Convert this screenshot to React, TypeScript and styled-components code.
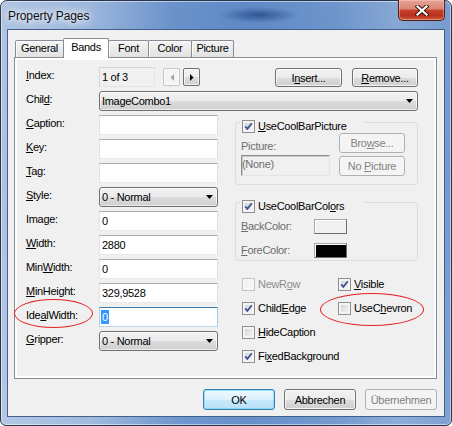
import React from "react";
import styled, { createGlobalStyle } from "styled-components";

const GlobalStyle = createGlobalStyle`
  html, body { margin: 0; padding: 0; background: #ffffff; }
  #root { width: 452px; height: 426px; }
  *, *::before, *::after { box-sizing: border-box; }
`;

const FONT = `"Liberation Sans", Arial, sans-serif`;

const Window = styled.div`
  width: 452px;
  height: 426px;
  border: 1px solid #28374d;
  border-radius: 7px 7px 6px 6px;
  padding: 0 6px 8px 6px;
  display: flex;
  flex-direction: column;
  font-family: ${FONT};
  font-size: 11px;
  letter-spacing: -0.3px;
  color: #000;
  background:
    radial-gradient(ellipse 40px 8px at 258px 14px, rgba(30, 62, 125, 0.7), rgba(30, 62, 125, 0) 100%),
    linear-gradient(90deg, rgba(255,255,255,0.5) 0%, rgba(255,255,255,0.38) 20%, rgba(255,255,255,0.08) 38%, rgba(255,255,255,0) 55%, rgba(255,255,255,0.1) 75%, rgba(255,255,255,0.26) 88%, rgba(255,255,255,0.16) 100%),
    linear-gradient(180deg, #5f8ac6 0%, #5885c4 40%, #6690ca 100%);
  box-shadow: inset 0 0 0 1px rgba(255,255,255,0.5);
`;

const TitleBar = styled.div`
  height: 28px;
  flex: none;
  display: flex;
  align-items: flex-start;
  justify-content: space-between;
`;

const Title = styled.div`
  padding: 7px 0 0 1px;
  font-size: 12px;
  line-height: 16px;
  letter-spacing: -0.1px;
  color: #101010;
  text-shadow: 0 0 6px #fff, 0 0 10px rgba(255,255,255,0.9), 0 0 14px rgba(255,255,255,0.7);
`;

const CloseButton = styled.div`
  width: 47px;
  height: 21px;
  margin-top: -1px;
  border: 1px solid #4d2019;
  border-top: none;
  border-radius: 0 0 5px 5px;
  background: linear-gradient(180deg, #e7a697 0%, #d98572 45%, #c5402b 52%, #b9311d 78%, #d05b40 100%);
  box-shadow: inset 0 0 0 1px rgba(255, 205, 195, 0.45);
  display: flex;
  align-items: center;
  justify-content: center;
`;

const Client = styled.div`
  flex: 1;
  border: 1px solid #41608c;
  background: #f0f0f0;
  padding: 8px 7px 6px 6px;
  display: flex;
  flex-direction: column;
`;

const TabStrip = styled.div`
  height: 19px;
  flex: none;
  display: flex;
  align-items: flex-end;
  padding-left: 1px;
`;

const Tab = styled.div<{ $active?: boolean; $w: number }>`
  width: ${(p) => p.$w}px;
  margin-left: -1px;
  &:first-child { margin-left: 0; }
  border: 1px solid #898c95;
  border-bottom: none;
  border-radius: 2px 2px 0 0;
  text-align: center;
  height: ${(p) => (p.$active ? 20 : 17)}px;
  line-height: ${(p) => (p.$active ? 16 : 15)}px;
  margin-bottom: ${(p) => (p.$active ? -1 : 0)}px;
  position: relative;
  z-index: ${(p) => (p.$active ? 1 : 0)};
  background: ${(p) => (p.$active ? "#ffffff" : "linear-gradient(180deg, #f3f3f3 0%, #ebebeb 50%, #e2e2e2 100%)")};
  box-shadow: ${(p) => (p.$active ? "none" : "inset 1px 1px 0 rgba(255,255,255,0.8)")};
`;

const Panel = styled.div`
  height: 322px;
  flex: none;
  border: 1px solid #898c95;
  background: #ffffff;
  padding: 2px;
  display: flex;
`;

const Page = styled.div`
  flex: 1;
  background: #f0f0f0;
  padding: 7px 16px 0 9px;
  display: flex;
  flex-direction: column;
  gap: 4px;
`;

const Row = styled.div`
  display: flex;
  align-items: flex-start;
  height: 20px;
`;

const Label = styled.div<{ $muted?: boolean }>`
  width: 73px;
  flex: none;
  line-height: 16px;
  position: relative;
  color: ${(p) => (p.$muted ? "#6d6d6d" : "#000")};
`;

const Acc = styled.u`
  text-decoration: underline;
  text-underline-offset: 1px;
`;

const IndexBox = styled.div`
  width: 56px;
  height: 20px;
  border: 1px solid;
  border-color: #d6d6d6 #e4e4e4 #e4e4e4 #d6d6d6;
  background: #f0f0f0;
  padding-left: 2px;
  line-height: 18px;
`;

const ArrowGroup = styled.div`
  display: flex;
  gap: 3px;
  margin: 1px 0 0 8px;
`;

const ArrowButton = styled.div<{ $disabled?: boolean }>`
  width: 17px;
  height: 18px;
  border: 1px solid ${(p) => (p.$disabled ? "#c2c4c6" : "#707070")};
  border-radius: 2px;
  background: ${(p) =>
    p.$disabled ? "#f4f4f4" : "linear-gradient(180deg, #f2f2f2 0%, #ebebeb 50%, #dddddd 51%, #cfcfcf 100%)"};
  box-shadow: inset 0 0 0 1px rgba(255,255,255,0.7);
  display: flex;
  align-items: center;
  justify-content: center;
`;

const Spacer = styled.div`
  flex: 1;
`;

const Button = styled.div<{ $w: number; $h?: number; $variant?: "normal" | "default" | "disabled" }>`
  width: ${(p) => p.$w}px;
  height: ${(p) => p.$h ?? 21}px;
  flex: none;
  border: 1px solid
    ${(p) => (p.$variant === "default" ? "#3c7fb1" : p.$variant === "disabled" ? "#adb2b5" : "#707070")};
  border-radius: 3px;
  background: ${(p) =>
    p.$variant === "default"
      ? "linear-gradient(180deg, #eef8fe 0%, #dcf1fc 50%, #c8e9fb 51%, #b9e1f7 100%)"
      : p.$variant === "disabled"
      ? "#f4f4f4"
      : "linear-gradient(180deg, #f2f2f2 0%, #ebebeb 50%, #dddddd 51%, #cfcfcf 100%)"};
  box-shadow: ${(p) =>
    p.$variant === "default"
      ? "inset 0 0 0 1px rgba(120, 220, 250, 0.8)"
      : p.$variant === "disabled"
      ? "none"
      : "inset 0 0 0 1px rgba(255,255,255,0.75)"};
  color: ${(p) => (p.$variant === "disabled" ? "#838383" : "#000")};
  display: flex;
  align-items: center;
  justify-content: center;
  white-space: pre;
  margin-top: ${(p) => (p.$h && p.$h < 20 ? 1 : 0)}px;
`;

const Combo = styled.div<{ $w: number }>`
  width: ${(p) => p.$w}px;
  height: 20px;
  flex: none;
  border: 1px solid #707070;
  border-radius: 3px;
  background: linear-gradient(180deg, #f2f2f2 0%, #ebebeb 50%, #dddddd 51%, #cfcfcf 100%);
  box-shadow: inset 0 0 0 1px rgba(255,255,255,0.6);
  padding: 0 4px 0 2px;
  display: flex;
  align-items: center;
  justify-content: space-between;
`;

const TextBox = styled.div<{ $focused?: boolean }>`
  width: 119px;
  height: 20px;
  flex: none;
  border: 1px solid;
  border-color: ${(p) => (p.$focused ? "#3d7bad #a4c9e3 #b7d9ed #b5cfe7" : "#abadb3 #dbdfe6 #e3e9ef #e2e3ea")};
  background: #ffffff;
  padding-left: 2px;
  line-height: 18px;
  white-space: nowrap;
`;

const Selected = styled.span`
  display: inline-block;
  background: #3399ff;
  color: #ffffff;
  line-height: 14px;
  padding: 0 1px;
  margin-left: -1px;
`;

const Columns = styled.div`
  display: flex;
  gap: 17px;
`;

const LeftCol = styled.div`
  width: 192px;
  display: flex;
  flex-direction: column;
  gap: 4px;
`;

const RightCol = styled.div`
  width: 183px;
  display: flex;
  flex-direction: column;
`;

const GroupBox = styled.div<{ $top: number; $pb: number }>`
  margin-top: ${(p) => p.$top}px;
  border: 1px solid #d5dfe5;
  border-radius: 3px;
  padding: 0 0 ${(p) => p.$pb}px 5px;
  display: flex;
  flex-direction: column;
  align-items: flex-start;
`;

const GroupHeader = styled.div`
  width: 123px;
  height: 13px;
  margin: -3px 0 0 -1px;
  padding-left: 2px;
  background: #f0f0f0;
  display: flex;
  align-items: center;
  gap: 3px;
  line-height: 13px;
`;

const PictureGrid = styled.div`
  display: grid;
  grid-template-columns: 89px 66px;
  grid-template-rows: 20px 20px;
  column-gap: 9px;
  row-gap: 3px;
`;

const MutedText = styled.div<{ $center?: boolean }>`
  color: #6d6d6d;
  align-self: ${(p) => (p.$center ? "center" : "end")};
  line-height: 14px;
`;

const NoneBox = styled.div`
  border: 1px solid;
  border-color: #8e8e8e #e3e3e3 #e3e3e3 #8e8e8e;
  box-shadow: inset 1px 1px 0 #c9c9c9;
  background: #f0f0f0;
  color: #6d6d6d;
  line-height: 17px;
  margin-top: -1px;
`;

const ColorGrid = styled.div`
  display: grid;
  grid-template-columns: 73px 33px;
  grid-auto-rows: 18px;
  row-gap: 6px;
  padding-top: 4px;
  align-items: center;
`;

const Swatch = styled.span<{ $color: string }>`
  display: block;
  width: 33px;
  height: 15px;
  background: ${(p) => p.$color};
  border: 1px solid;
  border-color: #a6a6a6 #6e6e6e #6e6e6e #a6a6a6;
  box-shadow: inset 1px 1px 0 #ffffff;
`;

const CheckGrid = styled.div`
  margin: 13px 0 0 7px;
  display: grid;
  grid-template-columns: 96px 1fr;
  grid-auto-rows: 20px;
  row-gap: 4px;
`;

const CheckItem = styled.div<{ $disabled?: boolean }>`
  display: flex;
  align-items: center;
  gap: 3px;
  position: relative;
  white-space: nowrap;
  color: ${(p) => (p.$disabled ? "#8d8d8d" : "#000")};
`;

const Box = styled.span<{ $disabled?: boolean }>`
  width: 13px;
  height: 13px;
  flex: none;
  border: 1px solid ${(p) => (p.$disabled ? "#c3c3c3" : "#8e8f8f")};
  background: ${(p) =>
    p.$disabled ? "linear-gradient(135deg, #ececec, #fafafa)" : "linear-gradient(135deg, #cdd0d5, #f8f8f8)"};
  box-shadow: inset 0 0 0 2px ${(p) => (p.$disabled ? "#f7f7f7" : "#f4f4f4")};
  display: flex;
`;

const Ellipse = styled.span<{ $l: number; $t: number; $w: number; $h: number }>`
  position: absolute;
  left: ${(p) => p.$l}px;
  top: ${(p) => p.$t}px;
  width: ${(p) => p.$w}px;
  height: ${(p) => p.$h}px;
  border: 1px solid #e32222;
  border-radius: 50%;
  pointer-events: none;
`;

const ButtonRow = styled.div`
  margin-top: 10px;
  display: flex;
  justify-content: flex-end;
  gap: 9px;
`;

function CheckBox({ checked, disabled }: { checked?: boolean; disabled?: boolean }) {
  return (
    <Box $disabled={disabled}>
      {checked && (
        <svg width="11" height="11" viewBox="0 0 11 11">
          <path d="M2.2 5.4 L4.4 7.9 L8.8 2.3" fill="none" stroke="#3d5390" strokeWidth="1.8" />
        </svg>
      )}
    </Box>
  );
}

function DropArrow() {
  return (
    <svg width="7" height="4" viewBox="0 0 7 4">
      <polygon points="0,0 7,0 3.5,4" fill="#000" />
    </svg>
  );
}

function SideArrow({ dir, color }: { dir: "left" | "right"; color: string }) {
  return (
    <svg width="4" height="7" viewBox="0 0 4 7">
      <polygon points={dir === "left" ? "4,0 4,7 0.5,3.5" : "0,0 0,7 3.5,3.5"} fill={color} />
    </svg>
  );
}

export default function App() {
  return (
    <>
      <GlobalStyle />
      <Window>
        <TitleBar>
          <Title>Property Pages</Title>
          <CloseButton>
            <svg width="14" height="11" viewBox="0 0 14 11">
              <path d="M2.5 1.5 L11.5 9.5 M11.5 1.5 L2.5 9.5" stroke="#3a1410" strokeWidth="4.2" strokeLinecap="square" />
              <path d="M2.5 1.5 L11.5 9.5 M11.5 1.5 L2.5 9.5" stroke="#ffffff" strokeWidth="2.2" strokeLinecap="square" />
            </svg>
          </CloseButton>
        </TitleBar>
        <Client>
          <TabStrip>
            <Tab $w={49}>General</Tab>
            <Tab $w={46} $active>Bands</Tab>
            <Tab $w={41}>Font</Tab>
            <Tab $w={44}>Color</Tab>
            <Tab $w={43}>Picture</Tab>
          </TabStrip>
          <Panel>
            <Page>
              <Row>
                <Label><Acc>I</Acc>ndex:</Label>
                <IndexBox>1 of 3</IndexBox>
                <ArrowGroup>
                  <ArrowButton $disabled><SideArrow dir="left" color="#a3a3a3" /></ArrowButton>
                  <ArrowButton><SideArrow dir="right" color="#000" /></ArrowButton>
                </ArrowGroup>
                <Spacer />
                <Button $w={67} $h={19} style={{ marginRight: 10 }}><span>I<Acc>n</Acc>sert...</span></Button>
                <Button $w={66} $h={19}><span><Acc>R</Acc>emove...</span></Button>
              </Row>
              <Row>
                <Label>Chil<Acc>d</Acc>:</Label>
                <Combo $w={319}>
                  <span>ImageCombo1</span>
                  <DropArrow />
                </Combo>
              </Row>
              <Columns>
                <LeftCol>
                  <Row><Label><Acc>C</Acc>aption:</Label><TextBox /></Row>
                  <Row><Label><Acc>K</Acc>ey:</Label><TextBox /></Row>
                  <Row><Label><Acc>T</Acc>ag:</Label><TextBox /></Row>
                  <Row>
                    <Label><Acc>S</Acc>tyle:</Label>
                    <Combo $w={119}><span>0 - Normal</span><DropArrow /></Combo>
                  </Row>
                  <Row><Label>Ima<Acc>g</Acc>e:</Label><TextBox>0</TextBox></Row>
                  <Row><Label><Acc>W</Acc>idth:</Label><TextBox>2880</TextBox></Row>
                  <Row><Label>Min<Acc>W</Acc>idth:</Label><TextBox>0</TextBox></Row>
                  <Row><Label><Acc>M</Acc>inHeight:</Label><TextBox>329,9528</TextBox></Row>
                  <Row>
                    <Label>
                      Ide<Acc>a</Acc>lWidth:
                      <Ellipse $l={-12} $t={-8} $w={79} $h={29} />
                    </Label>
                    <TextBox $focused><Selected>0</Selected></TextBox>
                  </Row>
                  <Row>
                    <Label><Acc>G</Acc>ripper:</Label>
                    <Combo $w={119}><span>0 - Normal</span><DropArrow /></Combo>
                  </Row>
                </LeftCol>
                <RightCol>
                  <GroupBox $top={7} $pb={8}>
                    <GroupHeader>
                      <CheckBox checked />
                      <span><Acc>U</Acc>seCoolBarPicture</span>
                    </GroupHeader>
                    <PictureGrid>
                      <MutedText>Picture:</MutedText>
                      <Button $w={66} $h={20} $variant="disabled"><span>Bro<Acc>w</Acc>se...</span></Button>
                      <NoneBox>(None)</NoneBox>
                      <Button $w={66} $h={20} $variant="disabled"><span>No <Acc>P</Acc>icture</span></Button>
                    </PictureGrid>
                  </GroupBox>
                  <GroupBox $top={17} $pb={1}>
                    <GroupHeader>
                      <CheckBox checked />
                      <span>UseCoolBarCol<Acc>o</Acc>rs</span>
                    </GroupHeader>
                    <ColorGrid>
                      <MutedText $center><Acc>B</Acc>ackColor:</MutedText>
                      <Swatch $color="#f0f0f0" />
                      <MutedText $center><Acc>F</Acc>oreColor:</MutedText>
                      <Swatch $color="#000000" />
                    </ColorGrid>
                  </GroupBox>
                  <CheckGrid>
                    <CheckItem $disabled><CheckBox disabled /><span>NewR<Acc>o</Acc>w</span></CheckItem>
                    <CheckItem><CheckBox checked /><span><Acc>V</Acc>isible</span></CheckItem>
                    <CheckItem><CheckBox checked /><span>Child<Acc>E</Acc>dge</span></CheckItem>
                    <CheckItem>
                      <CheckBox />
                      <span>UseC<Acc>h</Acc>evron</span>
                      <Ellipse $l={-18} $t={-5} $w={104} $h={33} />
                    </CheckItem>
                    <CheckItem><CheckBox /><span><Acc>H</Acc>ideCaption</span></CheckItem>
                    <span />
                    <CheckItem><CheckBox checked /><span>Fi<Acc>x</Acc>edBackground</span></CheckItem>
                  </CheckGrid>
                </RightCol>
              </Columns>
            </Page>
          </Panel>
          <ButtonRow>
            <Button $w={72} $variant="default">OK</Button>
            <Button $w={72}>Abbrechen</Button>
            <Button $w={72} $variant="disabled">Übernehmen</Button>
          </ButtonRow>
        </Client>
      </Window>
    </>
  );
}
